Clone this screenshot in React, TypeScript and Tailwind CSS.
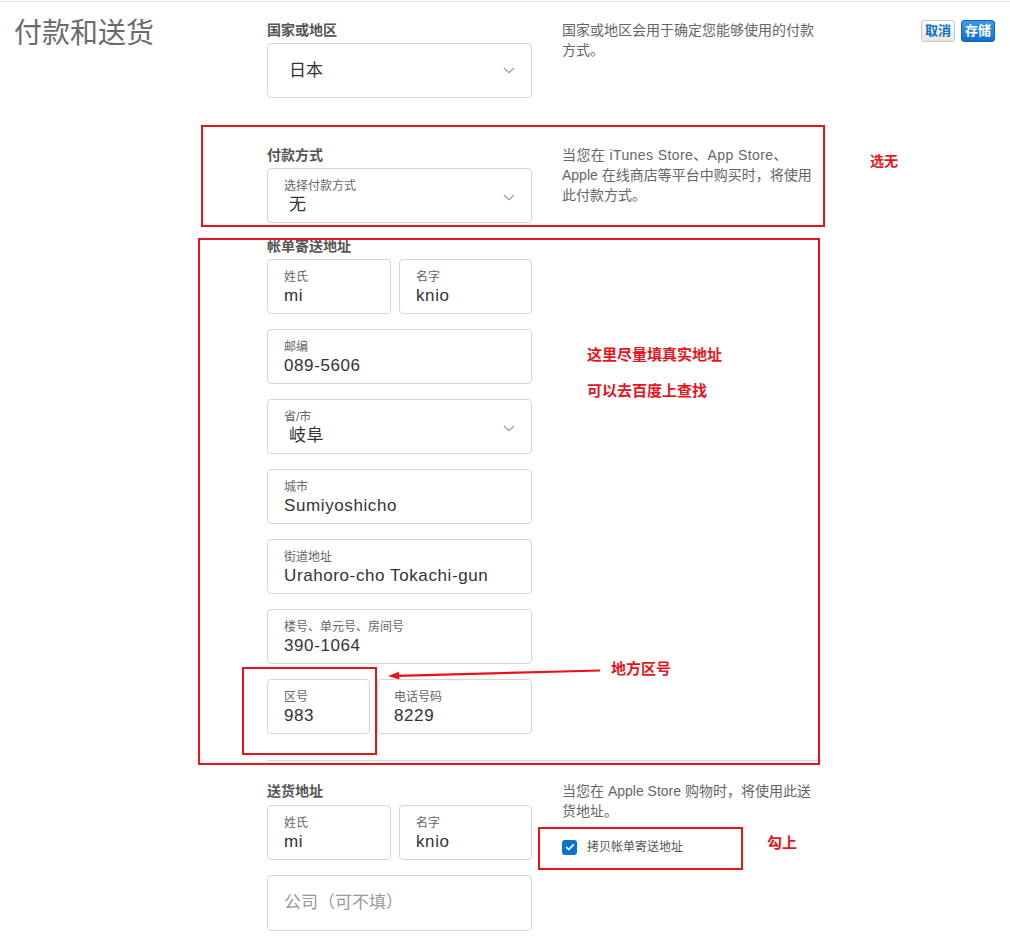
import type { ReactNode } from 'react'

const RED = 'border-[#e8141d]'

function Chevron() {
    return (
        <svg width="12" height="7" viewBox="0 0 12 7" className="block">
            <polyline points="1,1 6,5.6 11,1" fill="none" stroke="#999" strokeWidth="1.2" />
        </svg>
    )
}

function Section({ label, desc, children }: { label: string; desc?: ReactNode; children: ReactNode }) {
    return (
        <div className="flex">
            <div className="w-[265px]">
                <div className="text-[14px] leading-[20px] font-bold text-[#555] mb-[3px]">{label}</div>
                {children}
            </div>
            {desc && <div className="ml-[30px] text-[14px] leading-[20px] text-[#666] whitespace-nowrap">{desc}</div>}
        </div>
    )
}

function Field({ label, value, select, className = '' }: { label: string; value: string; select?: boolean; className?: string }) {
    return (
        <div className={`relative h-[55px] border border-[#d6d6d6] rounded-[4px] pl-[16px] pt-[9px] ${className}`}>
            <div className="text-[12px] leading-[16px] text-[#666]">{label}</div>
            <div className={`text-[17px] leading-[22px] text-[#333] tracking-[0.6px] ${select ? 'pl-[5px]' : ''}`}>{value}</div>
            {select && (
                <div className="absolute right-[16px] top-[25px]">
                    <Chevron />
                </div>
            )}
        </div>
    )
}

export default function App() {
    return (
        <div className="relative w-[1010px] h-[946px] bg-white overflow-hidden font-['Liberation_Sans','Noto_Sans_CJK_SC',sans-serif]">
            <div className="mt-px h-px bg-[#e4e4e4]" />
            <div className="flex">
                <div className="w-[267px] pl-[14px] pt-[15px]">
                    <h1 className="text-[28px] leading-[34px] text-[#6b6b6b] font-normal">付款和送货</h1>
                </div>

                <div className="w-[556px] pt-[18px]">
                    <Section label="国家或地区" desc={<>国家或地区会用于确定您能够使用的付款<br />方式。</>}>
                        <div className="h-[55px] border border-[#d6d6d6] rounded-[4px] flex items-center justify-between pl-[21px] pr-[16px]">
                            <span className="text-[17px] text-[#333]">日本</span>
                            <Chevron />
                        </div>
                    </Section>

                    <div className="mt-[47px]">
                        <Section
                            label="付款方式"
                            desc={<><span className="tracking-[0.4px]">当您在 iTunes Store、App Store、</span><br />Apple 在线商店等平台中购买时，将使用<br />此付款方式。</>}
                        >
                            <Field label="选择付款方式" value="无" select />
                        </Section>
                    </div>

                    <div className="mt-[13px]">
                        <Section label="帐单寄送地址">
                            <div className="flex flex-col gap-[15px]">
                                <div className="flex gap-[8px]">
                                    <Field label="姓氏" value="mi" className="w-[124px]" />
                                    <Field label="名字" value="knio" className="flex-1" />
                                </div>
                                <Field label="邮编" value="089-5606" />
                                <Field label="省/市" value="岐阜" select />
                                <Field label="城市" value="Sumiyoshicho" />
                                <Field label="街道地址" value="Urahoro-cho Tokachi-gun" />
                                <Field label="楼号、单元号、房间号" value="390-1064" />
                                <div className="flex gap-[7px]">
                                    <Field label="区号" value="983" className="w-[103px]" />
                                    <Field label="电话号码" value="8229" className="flex-1" />
                                </div>
                            </div>
                        </Section>
                    </div>

                    <div className="mt-[26px] h-px w-[555px] bg-[#d9d9d9]" />

                    <div className="mt-[20px]">
                        <Section
                            label="送货地址"
                            desc={
                                <>
                                    当您在 Apple Store 购物时，将使用此送<br />货地址。
                                    <div className="mt-[16px] flex items-center">
                                        <span className="w-[15px] h-[15px] rounded-[3px] bg-[#0b72cf] flex items-center justify-center">
                                            <svg width="10" height="8" viewBox="0 0 10 8">
                                                <polyline points="1.2,4.2 3.8,6.6 8.8,1.4" fill="none" stroke="#fff" strokeWidth="1.8" />
                                            </svg>
                                        </span>
                                        <span className="ml-[10px] text-[12px] text-[#555]">拷贝帐单寄送地址</span>
                                    </div>
                                </>
                            }
                        >
                            <div className="pt-px flex flex-col gap-[15px]">
                                <div className="flex gap-[8px]">
                                    <Field label="姓氏" value="mi" className="w-[124px]" />
                                    <Field label="名字" value="knio" className="flex-1" />
                                </div>
                                <div className="h-[56px] border border-[#d6d6d6] rounded-[4px] flex items-center pl-[16px]">
                                    <span className="text-[17px] text-[#999]">公司（可不填）</span>
                                </div>
                            </div>
                        </Section>
                    </div>
                </div>

                <div className="flex-1 flex justify-end items-start gap-[6px] pt-[18px] pr-[15px]">
                    <button className="h-[22px] px-[3px] rounded-[3px] border border-[#c9c9c9] bg-gradient-to-b from-[#ffffff] to-[#e6e6e6] text-[13px] leading-[20px] font-bold text-[#0b6fc5]">取消</button>
                    <button className="h-[22px] px-[3px] rounded-[3px] border border-[#0d67c0] bg-gradient-to-b from-[#3d98e8] to-[#106fcb] text-[13px] leading-[20px] font-bold text-white">存储</button>
                </div>
            </div>

            {/* annotations */}
            <div className={`absolute left-[201px] top-[125px] w-[624px] h-[102px] border-2 ${RED}`} />
            <div className={`absolute left-[198px] top-[238px] w-[622px] h-[527px] border-2 ${RED}`} />
            <div className={`absolute left-[242px] top-[667px] w-[135px] h-[88px] border-2 ${RED}`} />
            <div className={`absolute left-[538px] top-[827px] w-[205px] h-[43px] border-2 ${RED}`} />

            <div className="absolute left-[870px] top-[151px] text-[14px] leading-[20px] font-bold text-[#e8141d]">选无</div>
            <div className="absolute left-[587px] top-[345px] text-[15px] leading-[20px] font-bold text-[#e8141d]">这里尽量填真实地址</div>
            <div className="absolute left-[587px] top-[381px] text-[15px] leading-[20px] font-bold text-[#e8141d]">可以去百度上查找</div>
            <div className="absolute left-[611px] top-[659px] text-[15px] leading-[20px] font-bold text-[#e8141d]">地方区号</div>
            <div className="absolute left-[767px] top-[833px] text-[15px] leading-[20px] font-bold text-[#e8141d]">勾上</div>

            <svg className="absolute left-[385px] top-[662px]" width="220" height="22" viewBox="0 0 220 22">
                <line x1="215" y1="8.5" x2="12" y2="13.8" stroke="#e8141d" strokeWidth="2.2" />
                <polygon points="3,14 14,9.8 14.3,17.6" fill="#e8141d" />
            </svg>
        </div>
    )
}
